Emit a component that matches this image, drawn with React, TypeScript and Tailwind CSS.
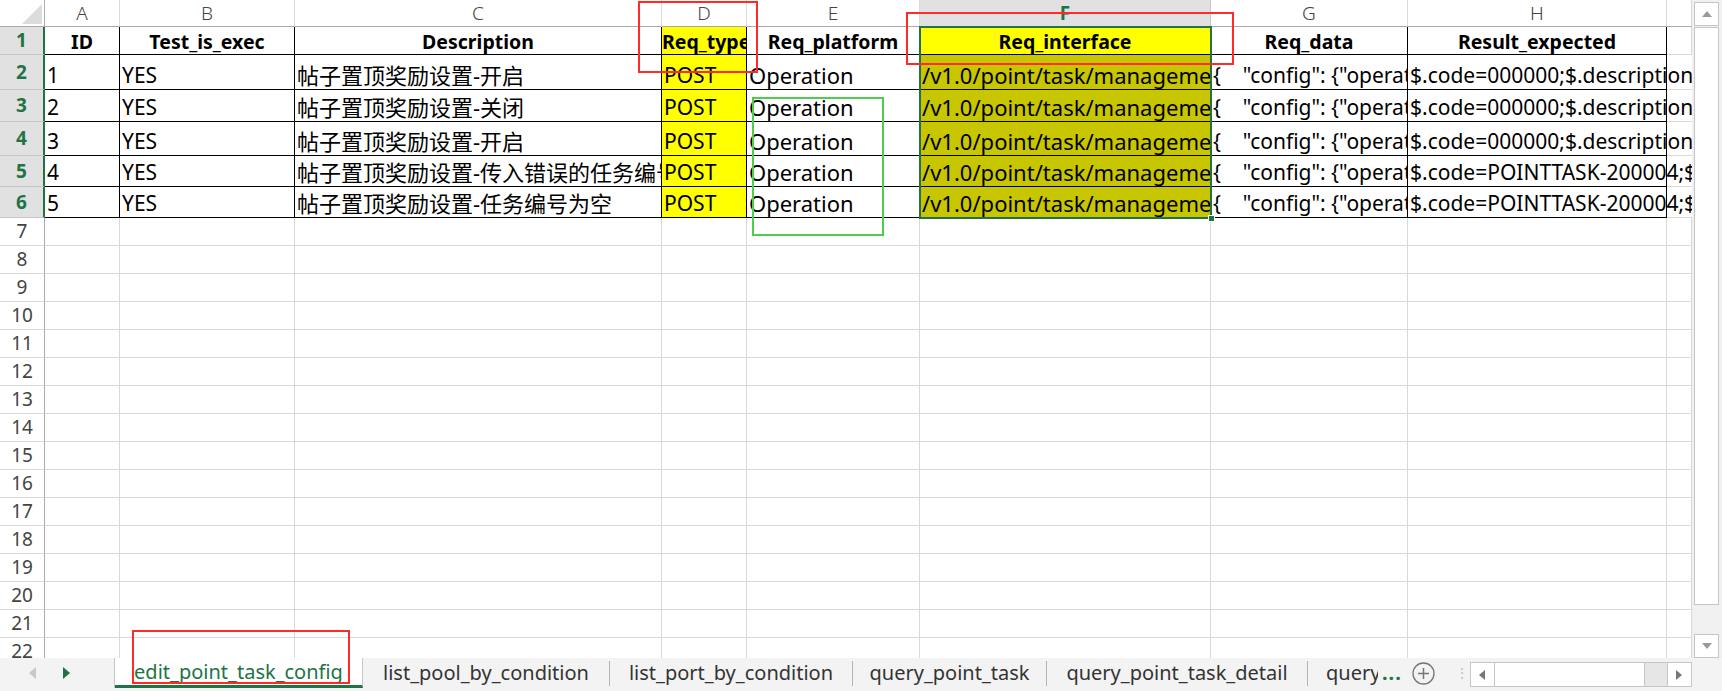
import React from "react";

// column widths (px incl. right border) — row header is 45
const COLS = [
  { letter: "A", w: "w-[75px]" },
  { letter: "B", w: "w-[175px]" },
  { letter: "C", w: "w-[367px]" },
  { letter: "D", w: "w-[85px]" },
  { letter: "E", w: "w-[173px]" },
  { letter: "F", w: "w-[291px]" },
  { letter: "G", w: "w-[197px]" },
  { letter: "H", w: "w-[259px]" },
  { letter: "", w: "w-[25px]" },
];

const HEAD = ["ID", "Test_is_exec", "Description", "Req_type", "Req_platform", "Req_interface", "Req_data", "Result_expected"];

const ROWS = [
  { h: "h-[35px]", d: ["1", "YES", "帖子置顶奖励设置-开启", "POST", "Operation", "/v1.0/point/task/management", '{    "config": {"operationType"', "$.code=000000;$.description=success"] },
  { h: "h-[32px]", d: ["2", "YES", "帖子置顶奖励设置-关闭", "POST", "Operation", "/v1.0/point/task/management", '{    "config": {"operationType"', "$.code=000000;$.description=success"] },
  { h: "h-[34px]", d: ["3", "YES", "帖子置顶奖励设置-开启", "POST", "Operation", "/v1.0/point/task/management", '{    "config": {"operationType"', "$.code=000000;$.description=success"] },
  { h: "h-[31px]", d: ["4", "YES", "帖子置顶奖励设置-传入错误的任务编号", "POST", "Operation", "/v1.0/point/task/management", '{    "config": {"operationType"', "$.code=POINTTASK-200004;$.description"] },
  { h: "h-[31px]", d: ["5", "YES", "帖子置顶奖励设置-任务编号为空", "POST", "Operation", "/v1.0/point/task/management", '{    "config": {"operationType"', "$.code=POINTTASK-200004;$.description"] },
];

// per-column text size / background for data rows
const CELL = [
  "text-[21px]",
  "text-[21px]",
  "text-[22px]",
  "text-[21px] bg-[#ffff00]",
  "text-[22px]",
  "text-[22px] bg-[#c8c600]",
  "text-[21px] whitespace-pre",
  "text-[21px] overflow-visible relative z-10",
];

const EMPTY_ROWS = Array.from({ length: 16 }, (_, i) => i + 7);

const TABS = [
  { name: "list_pool_by_condition", w: "w-[246px]" },
  { name: "list_port_by_condition", w: "w-[242px]" },
  { name: "query_point_task", w: "w-[193px]" },
  { name: "query_point_task_detail", w: "w-[260px]" },
];

function ColumnHeader() {
  return (
    <div className="flex h-[27px] shrink-0">
      <div className="relative w-[45px] border-r border-b border-[#ababab] bg-white">
        <svg className="absolute left-0 top-0" width="45" height="27">
          <polygon points="22,24 42,4 42,24" fill="#dcdcdc" />
        </svg>
      </div>
      {COLS.map((c) =>
        c.letter === "F" ? (
          <div key="F" className={`${c.w} flex items-center justify-center border-r border-b border-[#c6c6c6] bg-[#e1e1e1] text-[19px] font-bold text-[#217346]`}>
            F
          </div>
        ) : (
          <div key={c.letter || "x"} className={`${c.w} flex items-center justify-center border-r border-b border-r-[#d9d9d9] border-b-[#ababab] bg-white text-[19px] font-light text-[#444]`}>
            {c.letter}
          </div>
        )
      )}
    </div>
  );
}

function RowNum({ n, active }: { n: number; active?: boolean }) {
  return active ? (
    <div className="flex w-[45px] shrink-0 items-center justify-center border-b border-[#c6c6c6] border-r-2 border-r-[#217346] bg-[#e1e1e1] text-[19px] font-bold text-[#217346]">
      {n}
    </div>
  ) : (
    <div className="flex w-[45px] shrink-0 items-center justify-center border-b border-r border-b-[#d9d9d9] border-r-[#ababab] bg-white text-[19px] text-[#444]">
      {n}
    </div>
  );
}

function HeaderRow() {
  return (
    <div className="flex h-[28px] shrink-0">
      <RowNum n={1} active />
      {HEAD.map((t, i) => (
        <div
          key={t}
          className={`${COLS[i].w} flex items-end overflow-hidden whitespace-nowrap border-r border-b border-black pb-[1px] text-[19.5px] font-bold leading-[1.2] text-black ${
            i === 3 ? "justify-start bg-[#ffff00]" : "justify-center"
          } ${i === 5 ? "bg-[#ffff00]" : ""}`}
        >
          {t}
        </div>
      ))}
      <div className={`${COLS[8].w} border-r border-b border-[#d9d9d9]`} />
    </div>
  );
}

function DataRow({ n, h, d }: { n: number; h: string; d: string[] }) {
  return (
    <div className={`flex ${h} shrink-0`}>
      <RowNum n={n} active />
      {d.map((t, i) => (
        <div
          key={i}
          className={`${COLS[i].w} flex items-end whitespace-nowrap border-r border-b border-black pl-[2px] pb-[1px] leading-[1.2] text-black ${
            i === 7 ? "" : "overflow-hidden"
          } ${CELL[i]}`}
        >
          {t}
        </div>
      ))}
      <div className={`${COLS[8].w} border-b border-[#d9d9d9]`} />
    </div>
  );
}

function EmptyRow({ n }: { n: number }) {
  return (
    <div className="flex h-[28px] shrink-0">
      <RowNum n={n} />
      {COLS.map((c, i) => (
        <div key={i} className={`${c.w} border-r border-b border-[#d9d9d9]`} />
      ))}
    </div>
  );
}

function VScroll() {
  return (
    <div className="flex h-[658px] w-[30px] shrink-0 flex-col bg-[#f0f0f0] pl-[2px] pr-[3px] pt-[2px]">
      <div className="flex h-[24px] items-center justify-center border border-[#c6c6c6] bg-white">
        <svg width="10" height="6"><polygon points="0,6 5,0 10,6" fill="#9a9a9a" /></svg>
      </div>
      <div className="mt-[1px] h-[578px] border border-[#c6c6c6] bg-white" />
      <div className="flex-1" />
      <div className="flex h-[24px] items-center justify-center border border-[#c6c6c6] bg-white">
        <svg width="10" height="6"><polygon points="0,0 10,0 5,6" fill="#9a9a9a" /></svg>
      </div>
    </div>
  );
}

function TabBar() {
  return (
    <div className="flex h-[33px] w-[1722px] shrink-0 items-start bg-[#f3f3f3] text-[20px]">
      <div className="flex h-[30px] w-[115px] items-center border-r border-[#c6c6c6]">
        <svg className="ml-[29px]" width="7" height="12"><polygon points="7,0 0,6 7,12" fill="#c8c8c8" /></svg>
        <svg className="ml-[27px]" width="7" height="12"><polygon points="0,0 7,6 0,12" fill="#217346" /></svg>
      </div>
      <div className="flex h-[30px] w-[248px] items-center justify-center border-r border-[#c6c6c6] border-b-[3px] border-b-[#217346] bg-white text-[#217346]">
        edit_point_task_config
      </div>
      {TABS.map((t) => (
        <div key={t.name} className="flex h-[30px] items-center">
          <div className={`${t.w} flex items-center justify-center text-[#333]`}>{t.name}</div>
          <div className="h-[25px] w-px bg-[#b4b4b4]" />
        </div>
      ))}
      <div className="flex h-[30px] items-center pl-[18px]">
        <span className="w-[52px] overflow-hidden whitespace-nowrap text-[#333]">query_point_list</span>
        <span className="ml-[4px] font-bold tracking-[1px] text-[#217346]">...</span>
      </div>
      <div className="flex h-[30px] items-center pl-[10px]">
        <svg width="23" height="23" viewBox="0 0 23 23">
          <circle cx="11.5" cy="11.5" r="10.5" fill="none" stroke="#767676" strokeWidth="1.3" />
          <path d="M11.5 6v11M6 11.5h11" stroke="#767676" strokeWidth="1.5" />
        </svg>
      </div>
      <div className="flex h-[30px] items-center pl-[20px] text-[14px] leading-none text-[#c0c0c0]">⋮</div>
      <div className="ml-[1px] mt-[4px] flex h-[25px] w-[222px] border border-[#c6c6c6] bg-[#e6e6e6]">
        <div className="flex w-[24px] items-center justify-center border-r border-[#c6c6c6] bg-white">
          <svg width="6" height="10"><polygon points="6,0 0,5 6,10" fill="#777" /></svg>
        </div>
        <div className="w-[150px] border-r border-[#c6c6c6] bg-white" />
        <div className="flex-1" />
        <div className="flex w-[24px] items-center justify-center border-l border-[#c6c6c6] bg-white">
          <svg width="6" height="10"><polygon points="0,0 6,5 0,10" fill="#777" /></svg>
        </div>
      </div>
    </div>
  );
}

export default function App() {
  return (
    <div className="relative h-[691px] w-[1722px] overflow-hidden bg-white font-['Noto_Sans','Noto_Sans_CJK_SC',sans-serif]">
      <div className="flex h-[658px]">
        <div className="flex h-[658px] w-[1692px] flex-col overflow-hidden">
          <ColumnHeader />
          <HeaderRow />
          {ROWS.map((r, i) => (
            <DataRow key={i} n={i + 2} h={r.h} d={r.d} />
          ))}
          {EMPTY_ROWS.map((n) => (
            <EmptyRow key={n} n={n} />
          ))}
        </div>
        <VScroll />
      </div>
      <TabBar />

      {/* selection F1:F6 */}
      <div className="pointer-events-none absolute left-[919px] top-[26px] h-[193px] w-[293px] border-2 border-[#217346]" />
      <div className="pointer-events-none absolute left-[1208px] top-[215px] h-[7px] w-[7px] border border-white bg-[#217346]" />

      {/* annotation boxes */}
      <div className="pointer-events-none absolute left-[638px] top-[1px] h-[72px] w-[120px] border-2 border-[#ff2a2a]" />
      <div className="pointer-events-none absolute left-[906px] top-[12px] h-[53px] w-[328px] border-2 border-[#ff2a2a]" />
      <div className="pointer-events-none absolute left-[132px] top-[630px] h-[54px] w-[218px] border-2 border-[#ff2a2a]" />
      <div className="pointer-events-none absolute left-[752px] top-[97px] h-[139px] w-[132px] border-2 border-[#4ccf4c]" />
    </div>
  );
}
